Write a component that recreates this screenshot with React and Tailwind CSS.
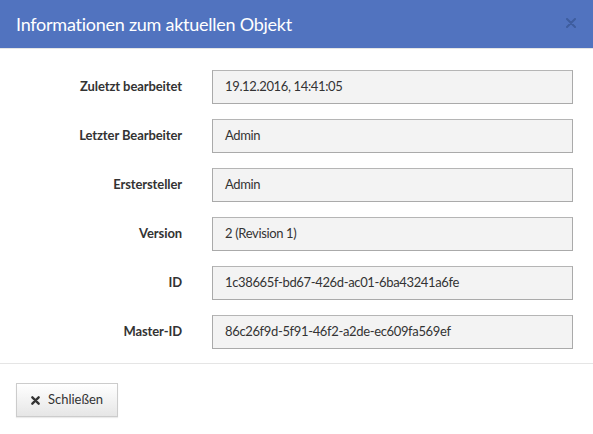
import React from "react";

const rows = [
  ["Zuletzt bearbeitet", "19.12.2016, 14:41:05"],
  ["Letzter Bearbeiter", "Admin"],
  ["Erstersteller", "Admin"],
  ["Version", "2 (Revision 1)"],
  ["ID", "1c38665f-bd67-426d-ac01-6ba43241a6fe"],
  ["Master-ID", "86c26f9d-5f91-46f2-a2de-ec609fa569ef"],
];

export default function App() {
  return (
    <div
      className="w-[593px] h-[434px] bg-white text-[#333] overflow-hidden"
      style={{ fontFamily: "Lato, 'Noto Sans', sans-serif" }}
    >
      <div className="h-[49px] bg-[#5173bf] flex items-center justify-between pl-[16px] pr-[16px] border-b border-[#e5e5e5]">
        <span className="text-white text-[18px] leading-none tracking-[-0.25px]">Informationen zum aktuellen Objekt</span>
        <svg width="10" height="10" viewBox="0 0 10 10" className="mr-[1px] mb-[2px]">
          <path d="M1 1L9 9M9 1L1 9" stroke="#3e5d9e" strokeWidth="2" strokeLinecap="round" />
        </svg>
      </div>
      <div className="pt-[21px] pb-[14px] flex flex-col gap-[15px] border-b border-[#e5e5e5]">
        {rows.map(([label, value]) => (
          <div key={label} className="flex items-center">
            <div className="w-[182px] text-right text-[13px] font-bold tracking-[-0.1px]">{label}</div>
            <div className="ml-[30px] w-[361px] h-[34px] bg-[#f3f3f3] border border-[#aaaaaa] border-t-[#b5b5b5] flex items-center px-[12px] text-[13px] tracking-[-0.35px]">
              {value}
            </div>
          </div>
        ))}
      </div>
      <div className="pt-[19px] pl-[16px]">
        <button className="w-[102px] h-[34px] border border-[#cccccc] bg-gradient-to-b from-white to-[#e6e6e6] flex items-center justify-center gap-[8px] text-[13px] text-[#333] shadow-[0_1px_1px_rgba(0,0,0,0.08)]">
          <svg width="9" height="9" viewBox="0 0 10 10">
            <path d="M1.5 1.5L8.5 8.5M8.5 1.5L1.5 8.5" stroke="#333" strokeWidth="2.6" strokeLinecap="round" />
          </svg>
          <span>Schließen</span>
        </button>
      </div>
    </div>
  );
}
